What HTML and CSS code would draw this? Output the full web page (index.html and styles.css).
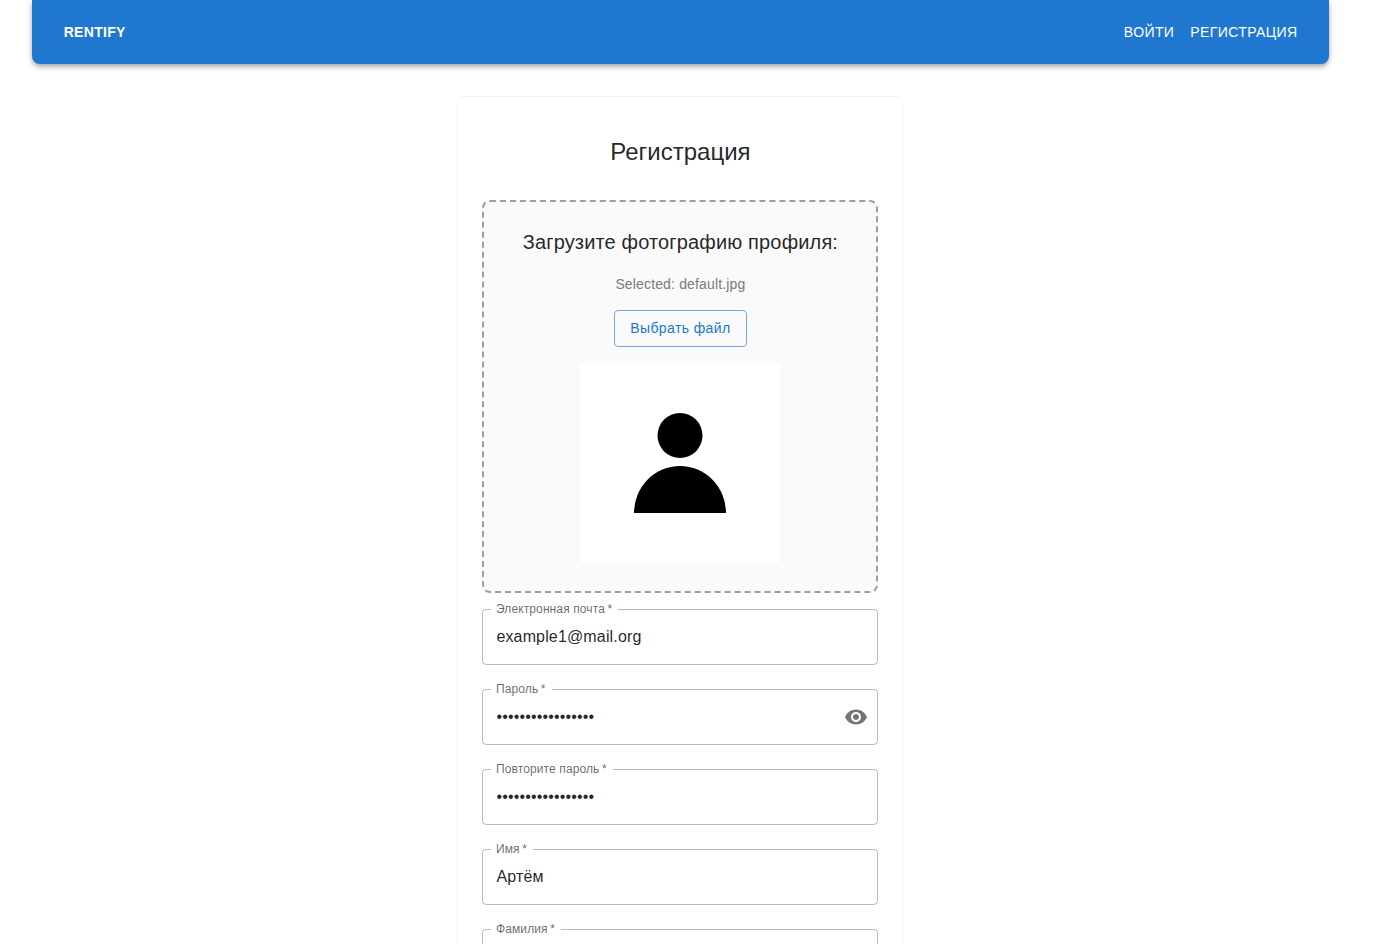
FILE: index.html
```html
<!DOCTYPE html>
<html lang="ru">
<head>
    <meta charset="UTF-8">
    <meta name="viewport" content="width=device-width, initial-scale=1.0">
    <title>Регистрация</title>
    <link rel="stylesheet" href="styles.css">
</head>
<body>
<header class="appbar">
    <span class="logo">RENTIFY</span>
    <nav class="nav">
        <a href="#">Войти</a>
        <a href="#">Регистрация</a>
    </nav>
</header>

<main class="card">
    <h1>Регистрация</h1>

    <section class="upload">
        <h2>Загрузите фотографию профиля:</h2>
        <p class="selected">Selected: default.jpg</p>
        <button type="button" class="file-button">Выбрать файл</button>
        <div class="avatar">
            <svg width="200" height="200" viewBox="0 0 200 200">
                <circle cx="100" cy="72.5" r="22.5"/>
                <path d="M54 150A46 47 0 0 1 146 150Z"/>
            </svg>
        </div>
    </section>

    <form class="fields">
        <fieldset class="field">
            <legend>Электронная почта&thinsp;*</legend>
            <input type="text" value="example1@mail.org">
        </fieldset>
        <fieldset class="field">
            <legend>Пароль&thinsp;*</legend>
            <input type="password" value="passwordpassword1">
            <svg class="eye" width="24" height="24" viewBox="0 0 24 24">
                <path d="M12 4.5C7 4.5 2.73 7.61 1 12c1.73 4.39 6 7.5 11 7.5s9.27-3.11 11-7.5c-1.73-4.39-6-7.5-11-7.5zM12 17c-2.76 0-5-2.24-5-5s2.24-5 5-5 5 2.24 5 5-2.24 5-5 5zm0-8c-1.66 0-3 1.34-3 3s1.34 3 3 3 3-1.34 3-3-1.34-3-3-3z"/>
            </svg>
        </fieldset>
        <fieldset class="field">
            <legend>Повторите пароль&thinsp;*</legend>
            <input type="password" value="passwordpassword1">
        </fieldset>
        <fieldset class="field">
            <legend>Имя&thinsp;*</legend>
            <input type="text" value="Артём">
        </fieldset>
        <fieldset class="field">
            <legend>Фамилия&thinsp;*</legend>
            <input type="text" value="">
        </fieldset>
    </form>
</main>
</body>
</html>
```

FILE: styles.css
```css
* {
    box-sizing: border-box;
}

body {
    margin: 0;
    padding: 0 49px 32px 32px;
    font-family: 'Liberation Sans', Arial, sans-serif;
    background-color: #fff;
    color: rgba(0, 0, 0, 0.87);
}

.appbar {
    display: flex;
    align-items: center;
    justify-content: space-between;
    height: 64px;
    padding: 0 23.5px 0 31.7px;
    background-color: #1f77d0;
    color: #fff;
    border-radius: 0 0 8px 8px;
    box-shadow: 0 2px 4px -1px rgba(0, 0, 0, 0.2), 0 4px 5px 0 rgba(0, 0, 0, 0.14), 0 1px 10px 0 rgba(0, 0, 0, 0.12);
}

.logo {
    font-size: 14px;
    font-weight: 700;
    letter-spacing: 0.3px;
}

.nav {
    display: flex;
}

.nav a {
    padding: 6px 8px;
    color: #fff;
    font-size: 14px;
    line-height: 24px;
    letter-spacing: 0.4px;
    text-decoration: none;
    text-transform: uppercase;
}

.card {
    width: 446px;
    margin: 32px 0 0 425.4px;
    padding: 24px;
    background-color: #fff;
    border: 1px solid #f5f5f5;
    border-radius: 4px;
}

h1 {
    margin: 16px 0 33px;
    font-size: 24px;
    font-weight: 400;
    line-height: 30px;
    text-align: center;
}

.upload {
    display: flex;
    flex-direction: column;
    align-items: center;
    height: 393px;
    padding: 24px 0 0;
    background-color: #fafafa;
    border: 2px dashed #9e9e9e;
    border-radius: 8px;
}

.upload h2 {
    margin: 0 0 16px;
    font-size: 20px;
    font-weight: 400;
    line-height: 32px;
    letter-spacing: 0.15px;
}

.selected {
    margin: 0 0 16px;
    font-size: 14px;
    line-height: 20px;
    letter-spacing: 0.15px;
    color: #7b7b7b;
}

.file-button {
    height: 37px;
    margin: 0 0 16px;
    padding: 0 15px 2px;
    background: none;
    border: 1px solid #6eaae6;
    border-radius: 4px;
    color: #1976d2;
    font-family: inherit;
    font-size: 14px;
    letter-spacing: 0.4px;
}

.avatar {
    width: 200px;
    height: 200px;
    background-color: #fff;
    border-radius: 4px;
}

.avatar svg {
    display: block;
}

.fields {
    display: flex;
    flex-direction: column;
    gap: 17px;
    margin-top: 9px;
}

/* the border is drawn through the middle of the legend, 7px down from the top of the box */
.field {
    position: relative;
    display: block;
    height: 63px;
    min-width: 0;
    margin: 0;
    padding: 0 8px;
    border: 1px solid rgba(0, 0, 0, 0.27);
    border-radius: 4px;
}

.field legend {
    height: 15px;
    padding: 0 6px 0 4.6px;
    font-size: 12px;
    line-height: 15px;
    letter-spacing: 0.11px;
    color: rgba(0, 0, 0, 0.6);
}

.field input {
    display: block;
    width: 100%;
    height: 47px;
    margin-top: -4px;
    padding: 0 5px;
    border: none;
    outline: none;
    background: none;
    font-family: inherit;
    font-size: 16px;
    letter-spacing: 0.15px;
    color: rgba(0, 0, 0, 0.87);
}

.eye {
    position: absolute;
    top: 8px;
    right: 9px;
    fill: rgba(0, 0, 0, 0.54);
}
```
